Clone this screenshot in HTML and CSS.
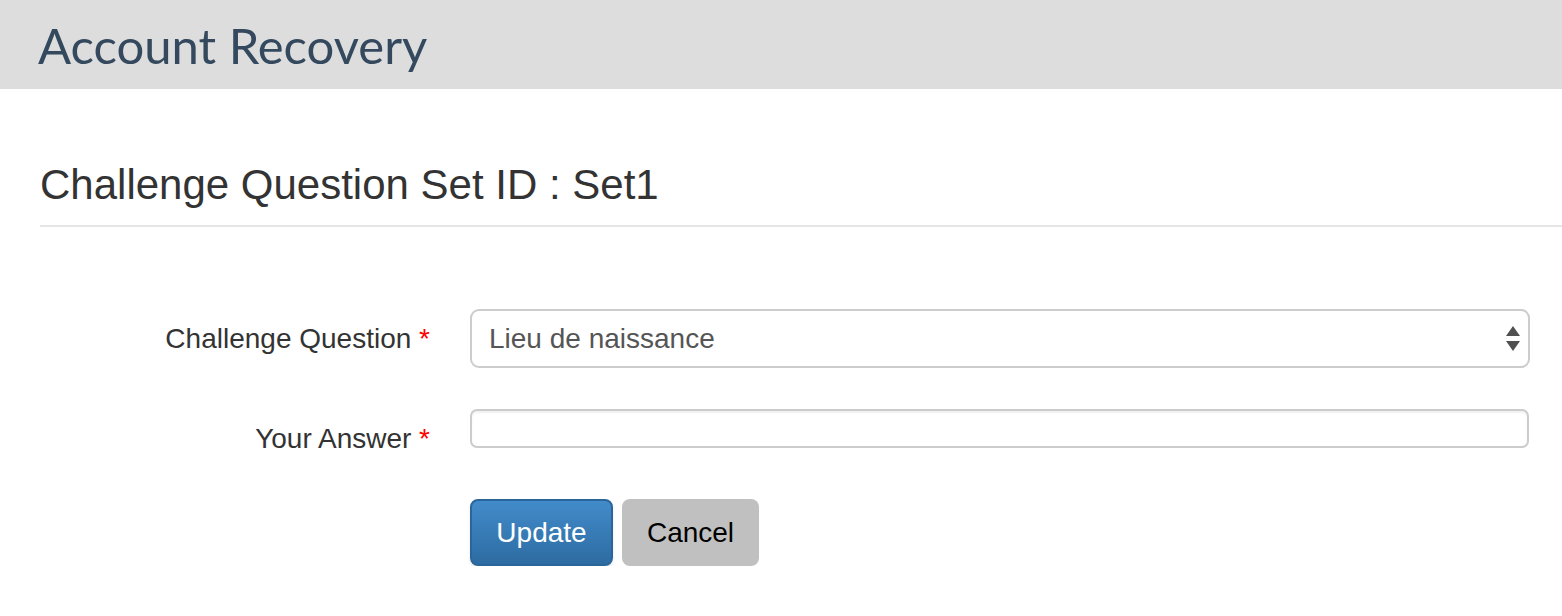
FILE: index.html
```html
<!DOCTYPE html>
<html>
<head>
<meta charset="utf-8">
<link rel="stylesheet" href="styles.css">
</head>
<body>
<header class="topbar">
  <h1 class="brand">Account Recovery</h1>
</header>
<main class="content">
  <h2 class="section-title">Challenge Question Set ID : Set1</h2>
  <form class="form">
    <div class="row row-select">
      <label class="label">Challenge Question <span class="req">*</span></label>
      <div class="control">
        <div class="select">
          <span class="select-text">Lieu de naissance</span>
          <svg class="arrows" width="14" height="26" viewBox="0 0 14 26"><path d="M7 0 L14 10 L0 10 Z M0 15 L14 15 L7 25 Z" fill="#505050"/></svg>
        </div>
      </div>
    </div>
    <div class="row row-input">
      <label class="label label-low">Your Answer <span class="req">*</span></label>
      <div class="control">
        <div class="input"></div>
      </div>
    </div>
    <div class="row row-buttons">
      <div class="label"></div>
      <div class="buttons">
        <button type="button" class="btn btn-primary">Update</button>
        <button type="button" class="btn btn-cancel">Cancel</button>
      </div>
    </div>
  </form>
</main>
</body>
</html>
```

FILE: styles.css
```css
html, body {
  margin: 0;
  padding: 0;
  background: #fff;
}
body {
  font-family: "Liberation Sans", Arial, sans-serif;
  color: #333;
  overflow: hidden;
}
.topbar {
  background: #dddddd;
  height: 89px;
  padding-left: 38px;
  box-sizing: border-box;
  display: flex;
  align-items: center;
}
.brand {
  margin: 0;
  font-family: Lato, sans-serif;
  font-weight: 400;
  font-size: 49px;
  color: #34495e;
  line-height: 1;
  padding-top: 1px;
}
.content {
  padding-left: 40px;
}
.section-title {
  margin: 0;
  padding-top: 71px;
  padding-bottom: 15px;
  font-weight: 400;
  font-size: 42px;
  line-height: 1.2;
  color: #333;
  border-bottom: 2px solid #e5e5e5;
}
.form {
  padding-top: 82px;
}
.row {
  display: flex;
  align-items: center;
}
.label {
  width: 390px;
  text-align: right;
  font-size: 28px;
  line-height: 32px;
  color: #333;
  flex-shrink: 0;
}
.row-input {
  align-items: flex-start;
}
.label-low {
  padding-top: 14px;
}
.req {
  color: #f00;
}
.control, .buttons {
  margin-left: 40px;
}
.control {
  width: 1060px;
}
.select {
  height: 59px;
  box-sizing: border-box;
  border: 2px solid #ccc;
  border-radius: 9px;
  display: flex;
  align-items: center;
  justify-content: space-between;
  padding: 0 8px 0 17px;
  font-size: 28px;
  color: #555;
}
.row-input {
  margin-top: 41px;
}
.row-input .control {
  width: 1059px;
}
.input {
  height: 39px;
  box-sizing: border-box;
  border: 2px solid #ccc;
  border-radius: 7px;
  box-shadow: inset 0 2px 2px rgba(0,0,0,0.06);
}
.row-buttons {
  margin-top: 44px;
}
.buttons {
  display: flex;
  gap: 9px;
}
.btn {
  height: 67px;
  border-radius: 8px;
  font-family: "Liberation Sans", Arial, sans-serif;
  font-size: 28px;
  padding: 0;
  cursor: pointer;
}
.btn-primary {
  width: 143px;
  color: #fff;
  border: 2px solid #2b669a;
  background: linear-gradient(to bottom, #428bca 0%, #2d6ca2 100%);
  box-shadow: 0 2px 3px rgba(0,0,0,0.1);
}
.btn-cancel {
  width: 137px;
  color: #000;
  border: none;
  background: #c0c0c0;
}
```
